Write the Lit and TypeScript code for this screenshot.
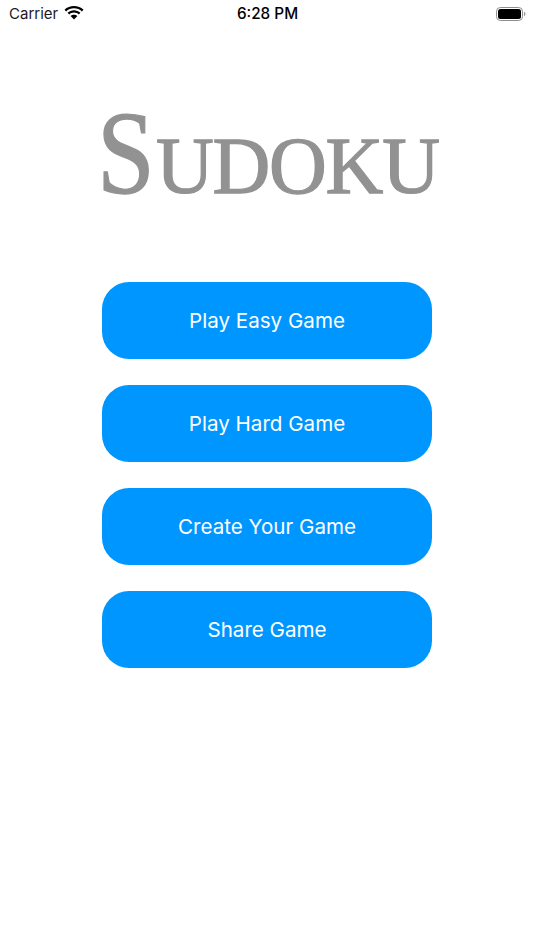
import { LitElement, html, css } from "lit";
import { customElement } from "lit/decorators.js";

@customElement("app-root")
export class AppRoot extends LitElement {
  static styles = css`
    :host { display: block; width: 534px; height: 950px; background: #fff; overflow: hidden; font-family: Inter, "Liberation Sans", sans-serif; }
    .status { height: 27px; display: grid; grid-template-columns: 1fr auto 1fr; align-items: center; padding: 0 8px 0 9px; color: #000; }
    .left { display: flex; align-items: center; gap: 6px; font-size: 15px; color: #1c1c1e; }
    .time { font-size: 15.3px; font-weight: 500; }
    .right { display: flex; justify-content: flex-end; }
    .title { margin-top: 77px; height: 100px; display: flex; justify-content: center; align-items: baseline; font-family: "Liberation Serif", "Times New Roman", serif; color: #929292; line-height: 100px; padding-left: 2px; }
    .cap { font-size: 118px; -webkit-text-stroke: 1.3px #929292; display: inline-block; transform: scaleX(0.88); transform-origin: left; margin-right: -7px; }
    .small { font-size: 80px; -webkit-text-stroke: 1.3px #929292; letter-spacing: -1.2px; }
    .buttons { margin-top: 77.5px; display: flex; flex-direction: column; align-items: center; gap: 26px; }
    .btn { width: 330px; height: 77px; border-radius: 27px; background: #0096ff; color: #fff; font-size: 20.6px; display: flex; align-items: center; justify-content: center; }
  `;
  render() {
    return html`
      <div class="status">
        <div class="left">
          <span>Carrier</span>
          <svg width="20" height="15" viewBox="0 0 20 15"><path d="M10 2.2c3 0 5.8 1.2 7.9 3.2l1.6-1.7C17 1.3 13.6 0 10 0S3 1.3.5 3.7l1.600 1.700C4.200 3.400 7 2.200 10 2.200z M10 6.600c1.800 0 3.500.7 4.800 1.900l1.600-1.700C14.700 5.200 12.400 4.300 10 4.300s-4.700.9-6.400 2.500l1.600 1.700C6.500 7.300 8.200 6.600 10 6.600z M10 8.700c-1.300 0-2.500.5-3.400 1.300L10 13.600l3.400-3.600c-.9-.8-2.100-1.300-3.400-1.300z" fill="#000"/></svg>
        </div>
        <div class="time">6:28 PM</div>
        <div class="right">
          <svg width="30" height="14" viewBox="0 0 30 14"><rect x="0.5" y="0.500" width="26" height="13" rx="3.800" fill="none" stroke="#8e8e8e"/><rect x="2" y="2" width="23" height="10" rx="2.500" fill="#000"/><path d="M28 4.800c.9.300 1.500 1.200 1.500 2.200s-.6 1.900-1.500 2.200z" fill="#9a9a9a"/></svg>
        </div>
      </div>
      <div class="title"><span class="cap">S</span><span class="small">UDOKU</span></div>
      <div class="buttons">
        ${["Play Easy Game", "Play Hard Game", "Create Your Game", "Share Game"].map((t) => html`<div class="btn">${t}</div>`)}
      </div>
    `;
  }
}
